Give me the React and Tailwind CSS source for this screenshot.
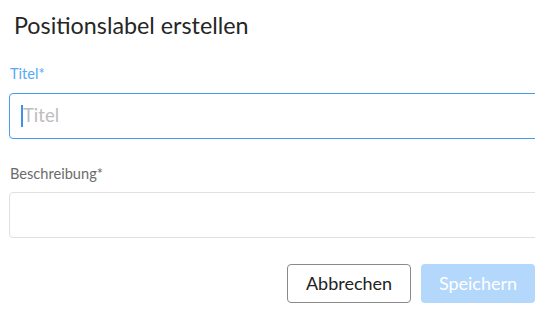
export default function App() {
  return (
    <div
      className="w-[548px] h-[312px] bg-white overflow-hidden"
      style={{ fontFamily: 'Lato, "Open Sans", sans-serif' }}
    >
      <div className="w-[535px] overflow-hidden">
        <h2 className="pl-[14px] pt-[9px] text-[23.3px] leading-[32px] font-normal text-[#262626]">
          Positionslabel erstellen
        </h2>

        {/* Titel */}
        <div className="pl-[9px] mt-[23px]">
          <label className="block pl-[1px] text-[14.6px] leading-[20px] text-[#55a9f7]">Titel*</label>
          <div className="mt-[9px] w-[560px] h-[46px] rounded-[4px] border border-[#4a9af0] flex items-center pl-[11px]">
            <span className="w-[2px] h-[22px] bg-[#3d8ff0]" />
            <span className="text-[18.5px] text-[#bdbdbd]">Titel</span>
          </div>
        </div>

        {/* Beschreibung */}
        <div className="pl-[9px] mt-[25px]">
          <label className="block pl-[1px] text-[14.6px] leading-[20px] text-[#6b6b6b]">Beschreibung*</label>
          <div className="mt-[8px] w-[560px] h-[46px] rounded-[4px] border border-[#e0e0e0]" />
        </div>

        <div className="flex justify-end gap-[10px] mt-[26px]">
          <button className="w-[124px] h-[39px] rounded-[4px] border border-[#8a8a8a] text-[18px] text-[#222]">
            Abbrechen
          </button>
          <button className="w-[114px] h-[39px] rounded-[4px] bg-[#b3d8fc] text-[18px] text-white">
            Speichern
          </button>
        </div>
      </div>
    </div>
  );
}
